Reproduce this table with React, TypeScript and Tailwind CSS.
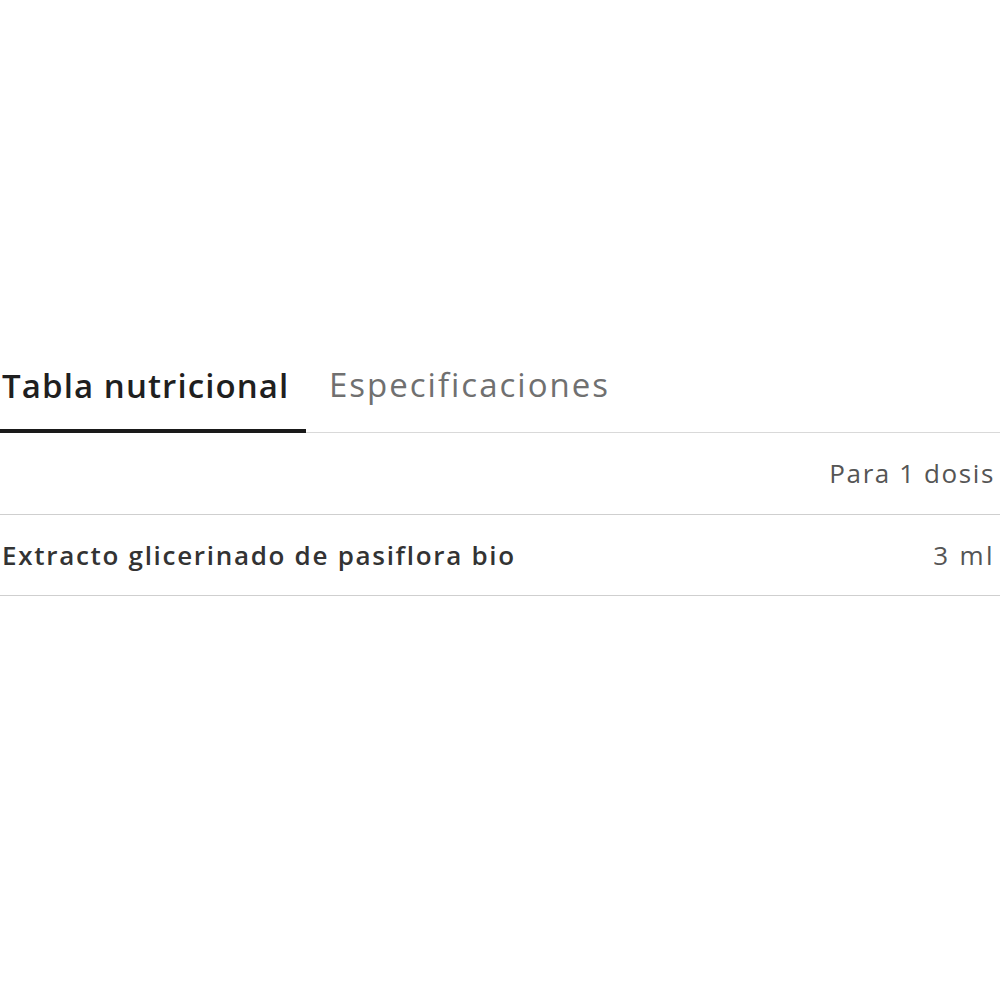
export default function App() {
  return (
    <main className="min-h-screen bg-white pt-[363px] font-['Open_Sans',sans-serif]">
      <div className="w-[1000px]">
        <div className="flex items-end border-b border-[#d9d9d9]">
          <button className="-mb-[1px] w-[306px] border-b-[4px] border-[#1a1a1a] pb-[21px] pl-[2px] text-left text-[33px] font-semibold leading-[44px] tracking-[1.1px] text-[#1f1f1f]">
            Tabla nutricional
          </button>
          <button className="pb-[25px] pl-[23px] text-left text-[33px] font-normal leading-[44px] tracking-[2px] text-[#707070]">
            Especificaciones
          </button>
        </div>
        <div className="flex h-[82px] items-center justify-end border-b border-[#cfcfcf] pr-[5px] text-[26px] tracking-[1.6px] text-[#555]">
          Para 1 dosis
        </div>
        <div className="flex h-[81px] items-center justify-between border-b border-[#cfcfcf] pl-[2px] pr-[5px] text-[26px]">
          <span className="font-semibold tracking-[1.7px] text-[#333]">Extracto glicerinado de pasiflora bio</span>
          <span className="tracking-[2.4px] text-[#555]">3 ml</span>
        </div>
      </div>
    </main>
  );
}
